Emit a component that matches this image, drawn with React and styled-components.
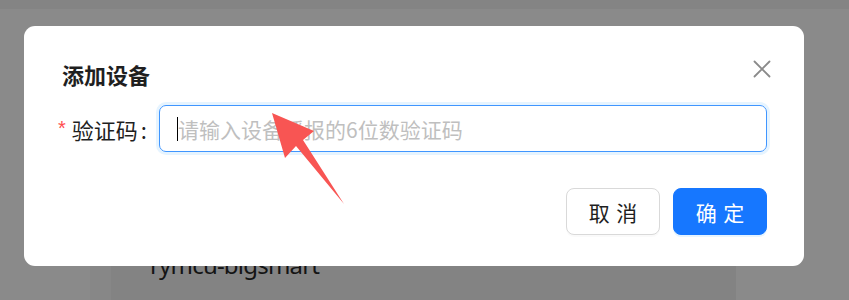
import React from 'react';
import styled, { createGlobalStyle } from 'styled-components';

const GlobalStyle = createGlobalStyle`
	html, body {
		margin: 0;
		padding: 0;
		background: #8a8a8a;
	}
	body {
		font-family: "Noto Sans CJK SC", "Noto Sans", sans-serif;
	}
`;

export default function App() {
	return (
		<>
			<GlobalStyle />
			<Screen>
				<TopBar />
				<Backdrop>
					<Gutter />
					<Card>
						<CardInner>
							<ProjectName>rymcu-bigsmart</ProjectName>
						</CardInner>
					</Card>
					<Gutter />
				</Backdrop>

				<Modal>
					<CloseButton aria-label="close">
						<svg width="18" height="18" viewBox="0 0 18 18">
							<path
								d="M1.5 1.5 L16.5 16.5 M16.5 1.5 L1.5 16.5"
								stroke="#8a8a8a"
								strokeWidth="1.8"
								strokeLinecap="round"
							/>
						</svg>
					</CloseButton>
					<Title>添加设备</Title>
					<FormRow>
						<Label>
							<Required>*</Required>
							验证码<Colon>:</Colon>
						</Label>
						<InputWrap>
							<Caret />
							<Input placeholder="请输入设备播报的6位数验证码" />
						</InputWrap>
					</FormRow>
					<Footer>
						<Button>
							<span>取消</span>
						</Button>
						<Button primary>
							<span>确定</span>
						</Button>
					</Footer>
				</Modal>

				<Arrow width="849" height="300" viewBox="0 0 849 300">
					<polygon
						points="272,113 314,131 303,140 344,204 296,146 285,158"
						fill="#f85553"
					/>
				</Arrow>
			</Screen>
		</>
	);
}

const Screen = styled.div`
	position: relative;
	width: 849px;
	height: 300px;
	overflow: hidden;
	background: #8a8a8a;
	display: flex;
	flex-direction: column;
`;

const TopBar = styled.div`
	height: 9px;
	background: #848484;
	flex-shrink: 0;
`;

const Backdrop = styled.div`
	flex: 1;
	display: flex;
	padding-top: 30px;
`;

const Gutter = styled.div`
	width: 90px;
	flex-shrink: 0;
	&:last-child {
		width: auto;
		flex: 1;
	}
`;

const Card = styled.div`
	width: 625px;
	background: #878787;
	padding-left: 21px;
	display: flex;
`;

const CardInner = styled.div`
	flex: 1;
	background: #838383;
	padding: 210px 0 0 39px;
`;

const ProjectName = styled.div`
	font-family: "Noto Sans", sans-serif;
	font-size: 24px;
	line-height: 32px;
	color: #141414;
	letter-spacing: -0.8px;
`;

const Modal = styled.div`
	position: absolute;
	left: 24px;
	top: 26px;
	width: 780px;
	height: 240px;
	box-sizing: border-box;
	background: #fff;
	border-radius: 11px;
	padding: 33px 37px 0 38px;
	display: flex;
	flex-direction: column;
`;

const CloseButton = styled.button`
	position: absolute;
	top: 34px;
	right: 33px;
	width: 18px;
	height: 18px;
	padding: 0;
	border: none;
	background: none;
	display: flex;
`;

const Title = styled.div`
	font-size: 22px;
	line-height: 30px;
	font-weight: 700;
	color: #1f1f1f;
`;

const FormRow = styled.div`
	margin-top: 16px;
	display: flex;
	align-items: center;
`;

const Label = styled.label`
	width: 97px;
	flex-shrink: 0;
	font-size: 22px;
	color: #1f1f1f;
	display: flex;
	align-items: center;
`;

const Required = styled.span`
	color: #ff4d4f;
	font-size: 20px;
	margin: 0 6px 0 -4px;
	font-family: "Liberation Sans", sans-serif;
`;

const Colon = styled.span`
	margin-left: 3px;
`;

const InputWrap = styled.div`
	position: relative;
	flex: 1;
	height: 47px;
	box-sizing: border-box;
	border: 1px solid #4096ff;
	border-radius: 7px;
	box-shadow: 0 0 0 3px rgba(5, 145, 255, 0.1);
	display: flex;
	align-items: center;
	padding-left: 17px;
`;

const Caret = styled.span`
	width: 1px;
	height: 24px;
	background: #000;
	flex-shrink: 0;
`;

const Input = styled.input`
	flex: 1;
	border: none;
	outline: none;
	padding: 0;
	font-family: "Noto Sans CJK SC", sans-serif;
	font-size: 21px;
	color: #262626;
	background: transparent;
	&::placeholder {
		color: #bfbfbf;
	}
`;

const Footer = styled.div`
	margin-top: 36px;
	display: flex;
	justify-content: flex-end;
	gap: 13px;
`;

const Button = styled.button`
	width: 94px;
	height: 47px;
	border-radius: 8px;
	box-sizing: border-box;
	font-family: "Noto Sans CJK SC", sans-serif;
	font-size: 21px;
	cursor: pointer;
	border: 1px solid ${p => (p.primary ? '#1677ff' : '#d9d9d9')};
	background: ${p => (p.primary ? '#1677ff' : '#fff')};
	color: ${p => (p.primary ? '#fff' : '#1f1f1f')};
	box-shadow: ${p =>
		p.primary ? '0 2px 0 rgba(5, 145, 255, 0.1)' : '0 2px 0 rgba(0, 0, 0, 0.02)'};

	span {
		letter-spacing: 0.3em;
		margin-right: -0.3em;
	}
`;

const Arrow = styled.svg`
	position: absolute;
	left: 0;
	top: 0;
	pointer-events: none;
`;
